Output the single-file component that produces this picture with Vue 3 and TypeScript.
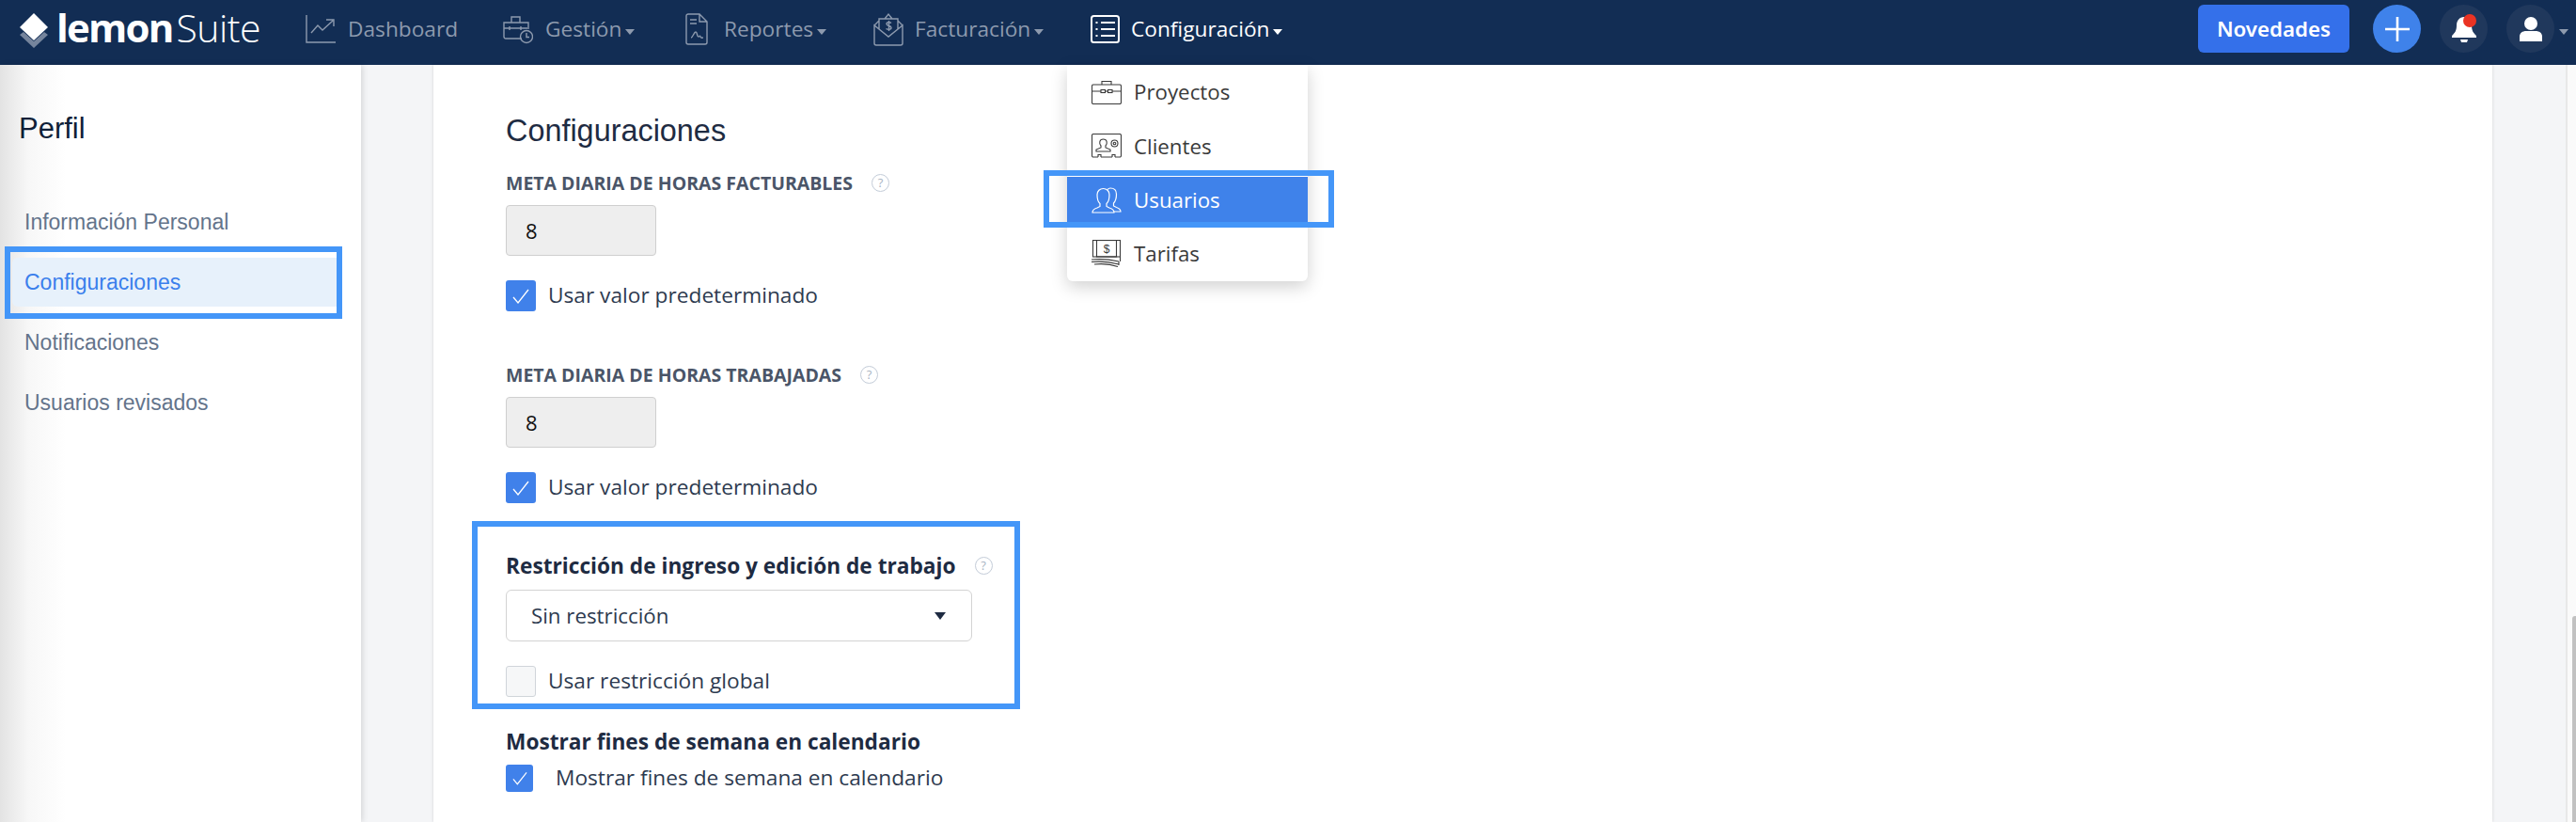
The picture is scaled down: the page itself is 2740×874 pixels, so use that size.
<script setup lang="ts">
const sideItems = [
  { label: 'Información Personal', active: false },
  { label: 'Configuraciones', active: true },
  { label: 'Notificaciones', active: false },
  { label: 'Usuarios revisados', active: false },
]
</script>

<template>
  <div class="page">
    <header class="topbar">
      <div class="logo">
        <svg class="logo-mark" width="32" height="40" viewBox="0 0 32 40">
          <path d="M1 26 L5 23 L16 33 L27 23 L31 26 L16 40Z" fill="#75849c" />
          <path d="M16 3 L31 18 L16 32 L1 18Z" fill="#fff" />
        </svg>
        <span class="logo-bold">lemon</span><span class="logo-light">Suite</span>
      </div>
      <nav class="nav">
        <a class="nav-item w-dash">
          <svg width="32" height="32" viewBox="0 0 32 32" fill="none" stroke="currentColor" stroke-width="1.4">
            <path d="M1 1V30H32" />
            <path d="M6 20L13 12L18 17L29 7M22 6H30V13" />
          </svg>
          <span>Dashboard</span>
        </a>
        <a class="nav-item w-ges">
          <svg width="32" height="32" viewBox="0 0 32 32" fill="none" stroke="currentColor" stroke-width="1.4">
            <path d="M20 26H3a2 2 0 0 1-2-2V9h26v7M9 9V3h9v6M1 15h25M7 13v4M19 13v4" />
            <circle cx="25" cy="24" r="6.5" />
            <path d="M25 20v4.5h3" />
          </svg>
          <span>Gestión</span><i class="caret" />
        </a>
        <a class="nav-item w-rep">
          <svg width="24" height="34" viewBox="0 0 24 34" fill="none" stroke="currentColor" stroke-width="1.4">
            <path d="M15 1H3a2 2 0 0 0-2 2v28a2 2 0 0 0 2 2h18a2 2 0 0 0 2-2V9ZM15 1v8h8M5 7h7M5 11h7" />
            <path d="M6 26c2 0 3-6 5-6s1 5 3 5 1-2 2 0 2 1 3 1" />
          </svg>
          <span>Reportes</span><i class="caret" />
        </a>
        <a class="nav-item w-fac">
          <svg width="32" height="36" viewBox="0 0 32 36" fill="none" stroke="currentColor" stroke-width="1.4">
            <path d="M1 14v19a2 2 0 0 0 2 2h26a2 2 0 0 0 2-2V14L16 26ZM1 14l5-5M31 14l-5-5M6 18V7h20v11M12 7l4-5 4 5" />
            <path d="M19 11.5c-1-1-5-1.500-5 1s5 1.500 5 4-4 2-5.500 1M16.500 9v11" />
          </svg>
          <span>Facturación</span><i class="caret" />
        </a>
        <a class="nav-item active w-con">
          <svg width="32" height="32" viewBox="0 0 32 32" fill="none" stroke="currentColor" stroke-width="2">
            <rect x="1" y="2" width="29" height="28" rx="2.500" />
            <path d="M11 9h15M11 16h15M11 23h15M5.500 9h2M5.500 16h2M5.500 23h2" />
          </svg>
          <span>Configuración</span><i class="caret" />
        </a>
      </nav>
      <div class="top-actions">
        <button class="news">Novedades</button>
        <button class="round plus" aria-label="Nuevo">
          <svg width="26" height="26" viewBox="0 0 26 26"><path d="M13 0v26M0 13h26" stroke="#fff" stroke-width="2.600" /></svg>
        </button>
        <button class="round" aria-label="Notificaciones">
          <svg width="28" height="32" viewBox="0 0 28 32">
            <path d="M14 3c5 0 8 4 8 9 0 6 2 8 5 11v2H1v-2c3-3 5-5 5-11 0-5 3-9 8-9Z" fill="#fff" />
            <path d="M10 27h8l-1 3h-6Z" fill="#fff" />
            <circle cx="20" cy="7" r="7" fill="#ea3323" />
          </svg>
        </button>
        <button class="round" aria-label="Usuario">
          <svg width="24" height="26" viewBox="0 0 24 26">
            <circle cx="12" cy="7" r="7" fill="#fff" />
            <path d="M0 26v-5c0-4 3-6 7-6h10c4 0 7 2 7 6v5Z" fill="#fff" />
          </svg>
        </button>
        <i class="caret user-caret" />
      </div>
    </header>

    <div class="body">
      <aside class="sidebar">
        <h2 class="side-title">Perfil</h2>
        <ul class="side-list">
          <li v-for="item in sideItems" :key="item.label" class="side-item" :class="{ on: item.active }">
            {{ item.label }}
          </li>
        </ul>
      </aside>

      <main class="main">
        <section class="card">
          <h1 class="heading">Configuraciones</h1>

          <div class="label"><span>META DIARIA DE HORAS FACTURABLES</span><span class="help help-1">?</span></div>
          <div class="input">8</div>
          <label class="check-row">
            <span class="check">
              <svg width="18" height="16" viewBox="0 0 18 16"><path d="M1 9l5 6L17 1" fill="none" stroke="#fff" stroke-width="1.300" /></svg>
            </span>
            <span class="check-text">Usar valor predeterminado</span>
          </label>

          <div class="label second"><span>META DIARIA DE HORAS TRABAJADAS</span><span class="help help-1">?</span></div>
          <div class="input">8</div>
          <label class="check-row">
            <span class="check">
              <svg width="18" height="16" viewBox="0 0 18 16"><path d="M1 9l5 6L17 1" fill="none" stroke="#fff" stroke-width="1.300" /></svg>
            </span>
            <span class="check-text">Usar valor predeterminado</span>
          </label>

          <div class="title-row restr"><span>Restricción de ingreso y edición de trabajo</span><span class="help help-2">?</span></div>
          <div class="select"><span>Sin restricción</span><i class="sel-caret" /></div>
          <label class="check-row global">
            <span class="check empty" />
            <span class="check-text">Usar restricción global</span>
          </label>

          <div class="title-row weekend"><span>Mostrar fines de semana en calendario</span></div>
          <label class="check-row last">
            <span class="check small">
              <svg width="16" height="15" viewBox="0 0 18 16"><path d="M1 9l5 6L17 1" fill="none" stroke="#fff" stroke-width="1.300" /></svg>
            </span>
            <span class="check-text">Mostrar fines de semana en calendario</span>
          </label>
        </section>
      </main>

      <div class="scroll"><div class="thumb" /></div>
    </div>

    <div class="menu">
      <div class="menu-item">
        <svg width="32" height="26" viewBox="0 0 32 26" fill="none" stroke="#3a3a3a" stroke-width="1.100">
          <rect x="0.500" y="5" width="31" height="20.500" rx="1.500" />
          <path d="M11 5V1.500h10V5M0.500 12H10M22 12h9.500" />
          <rect x="10" y="10.500" width="4.500" height="3" /><rect x="17.500" y="10.500" width="4.500" height="3" />
          <path d="M14.500 12h3" />
        </svg>
        <span>Proyectos</span>
      </div>
      <div class="menu-item">
        <svg width="32" height="26" viewBox="0 0 32 26" fill="none" stroke="#3a3a3a" stroke-width="1.100">
          <path d="M7 25H2a1.500 1.500 0 0 1-1.500-1.500V2A1.500 1.500 0 0 1 2 .5h28A1.500 1.500 0 0 1 31.500 2v21.500A1.500 1.500 0 0 1 30 25h-5M10 25h12M7 25v-2.500h3V25M22 25v-2.500h3V25" />
          <path d="M5 19v-2l5-2v-2c-2-2-2-7 2.500-7s4.500 5 2.500 7v2l5 2v2Z" />
          <circle cx="24.500" cy="10.500" r="3.500" /><circle cx="24.500" cy="10.500" r="1.300" />
        </svg>
        <span>Clientes</span>
      </div>
      <div class="menu-item sel">
        <svg width="32" height="28" viewBox="0 0 32 28" fill="none" stroke="#fff" stroke-width="1.200">
          <path d="M1 27c0-3 2-4 5-5l3-1.500v-3C6 15 6 11 6 8c0-4 3-6.500 6.500-6.500S19 4 19 8c0 3 0 7-3 9.500v3l3 1.500c3 1 5 2 5 5Z" />
          <path d="M17 2.500c1-1 2-1.500 3-1.500 4 0 6.500 2.500 6.500 6.500 0 3-.5 7-3 9.500v3l3 1.500c3 1 4.500 2.500 4.500 4.500h-7" />
        </svg>
        <span>Usuarios</span>
      </div>
      <div class="menu-item">
        <svg width="32" height="29" viewBox="0 0 32 29" fill="none" stroke="#3a3a3a" stroke-width="1.100">
          <rect x="1.500" y="0.500" width="29" height="17.500" />
          <rect x="5.500" y="0.500" width="21" height="17.500" />
          <path d="M0 21c10-1 20 0 29 2M0 23.500c10-1 20 0 29 2.500M3 26c9-1 18 0 25 2.500M30.500 18v5M29 23v4" />
          <text x="16" y="14" font-size="12" text-anchor="middle" fill="#3a3a3a" stroke="none" font-family="Liberation Sans">$</text>
        </svg>
        <span>Tarifas</span>
      </div>
    </div>

    <div class="mark mark-side" />
    <div class="mark mark-menu" />
    <div class="mark mark-restr" />
  </div>
</template>

<style>
html, body { margin: 0; padding: 0; background: #fff; overflow: hidden; }
</style>

<style scoped>
.page {
  position: relative;
  width: 2740px;
  height: 874px;
  overflow: hidden;
  display: flex;
  flex-direction: column;
  font-family: "Open Sans", "Noto Sans", sans-serif;
}

/* top bar */
.topbar {
  flex: 0 0 69px;
  box-sizing: border-box;
  display: flex;
  align-items: center;
  background: #122d54;
  padding: 0 0 8px 20px;
  color: #fff;
}
.logo { display: flex; align-items: center; width: 305px; }
.logo-mark { margin-right: 8px; }
.logo-bold { font-size: 42px; font-weight: 700; letter-spacing: -1.800px; margin-top: -4px; }
.logo-light { font-size: 41px; font-weight: 300; letter-spacing: -.500px; margin-top: -4px; margin-left: 4px; }
.nav { display: flex; align-items: center; }
.nav-item { display: flex; align-items: center; color: #8d9aae; font-size: 22.700px; }
.nav-item.active { color: #fff; }
.nav-item svg { margin-right: 13px; flex: none; }
.nav-item.w-rep svg { margin-right: 17px; }
.nav-item.w-fac svg { margin-right: 12px; }
.nav-item.w-con svg { margin-right: 11px; }
.w-dash { width: 210px; }
.w-ges { width: 194px; }
.w-rep { width: 200px; }
.w-fac { width: 231px; }
.caret {
  display: inline-block;
  margin-left: 4px;
  margin-top: 6px;
  border-left: 5.500px solid transparent;
  border-right: 5.500px solid transparent;
  border-top: 6px solid currentColor;
}
.top-actions {
  position: relative;
  margin-left: auto;
  display: flex;
  align-items: center;
  gap: 20px;
  padding-right: 23px;
}
.news {
  width: 161px;
  height: 51px;
  margin-right: 5px;
  background: #3470ea;
  border: 0;
  border-radius: 6px;
  color: #fff;
  font: 600 22.300px "Noto Sans", sans-serif;
}
.round {
  width: 51px;
  height: 51px;
  padding: 0;
  border: 0;
  border-radius: 50%;
  background: #20385c;
  display: flex;
  align-items: center;
  justify-content: center;
}
.round.plus { background: #3f82ea; }
.user-caret { position: absolute; right: 8px; top: 26px; margin: 0; color: #8d9aae; }

/* body */
.body { flex: 1; display: flex; min-height: 0; }
.sidebar {
  flex: 0 0 384px;
  position: relative;
  background: linear-gradient(90deg, #e3e3e3 0, #f7f7f7 30px, #fff 70px);
  box-shadow: 2px 0 6px rgba(0, 0, 0, .12);
  z-index: 1;
}
.side-title {
  margin: 49px 0 0 20px;
  font: 400 31px/38px "Liberation Sans", sans-serif;
  color: #0f1f38;
}
.side-list { list-style: none; margin: 54px 0 0 13px; padding: 0; }
.side-item {
  height: 52px;
  margin-bottom: 12px;
  padding-left: 13px;
  display: flex;
  align-items: center;
  border-radius: 6px 0 0 6px;
  font: 400 23px "Liberation Sans", sans-serif;
  color: #64748b;
}
.side-item.on { background: #e7f1fb; color: #3a7fec; margin-right: 26px; }

.main {
  flex: 1;
  display: flex;
  padding: 0 78px 0 77px;
  background: #f4f5f7;
}
.card {
  flex: 1;
  background: #fff;
  padding-left: 77px;
  box-shadow: 0 0 3px rgba(0, 0, 0, .15);
}
.heading {
  margin: 51px 0 0;
  font: 400 32.400px/38px "Liberation Sans", sans-serif;
  color: #1e2b42;
}
.label {
  margin-top: 25px;
  height: 22px;
  display: flex;
  align-items: center;
  font-size: 19.500px;
  font-weight: 700;
  color: #4a5568;
}
.label.second { margin-top: 56px; }
.help {
  flex: none;
  width: 19px;
  height: 19px;
  border: 1px solid #c3ccd8;
  border-radius: 50%;
  box-sizing: border-box;
  display: flex;
  align-items: center;
  justify-content: center;
  font-size: 13px;
  font-weight: 400;
  color: #a9b4c3;
}
.help-1 { margin-left: 20px; }
.help-2 { margin-left: 20px; }
.input {
  width: 160px;
  height: 54px;
  margin-top: 13px;
  box-sizing: border-box;
  padding-left: 20px;
  display: flex;
  align-items: center;
  background: #eee;
  border: 1px solid #cfcfcf;
  border-radius: 4px;
  font-size: 22px;
  color: #111;
}
.check-row {
  margin-top: 26px;
  display: flex;
  align-items: center;
  gap: 13px;
  height: 33px;
  font-size: 22.700px;
  color: #2d3a4f;
}
.check-text { margin-top: -2px; }
.check {
  flex: none;
  box-sizing: border-box;
  width: 32px;
  height: 33px;
  border-radius: 3px;
  background: #4081ea;
  display: flex;
  align-items: center;
  justify-content: center;
}
.check.empty { background: #f6f7f8; border: 1px solid #d0d5da; }
.check.small { width: 29px; height: 29px; }
.title-row {
  display: flex;
  align-items: center;
  height: 28px;
  font-size: 22.700px;
  font-weight: 700;
  color: #1e2b42;
}
.restr { margin-top: 52px; }
.select {
  width: 496px;
  height: 55px;
  margin-top: 12px;
  box-sizing: border-box;
  padding: 0 27px 0 26px;
  display: flex;
  align-items: center;
  justify-content: space-between;
  border: 1px solid #d3d3d3;
  border-radius: 6px;
  font-size: 22.300px;
  color: #2d3a4f;
}
.sel-caret {
  border-left: 6px solid transparent;
  border-right: 6px solid transparent;
  border-top: 8px solid #1e2b42;
}
.global { margin-top: 26px; }
.weekend { margin-top: 33px; }
.check-row.last { margin-top: 11px; gap: 24px; height: 29px; }

.scroll {
  flex: 0 0 11px;
  position: relative;
  background: #fafafa;
  border-left: 2px solid #e8e8e8;
  box-sizing: border-box;
}
.thumb { position: absolute; right: 0; top: 586px; bottom: 0; width: 4px; background: #c1c1c1; border-radius: 3px 0 0 0; }

/* dropdown */
.menu {
  position: absolute;
  left: 1135px;
  top: 69px;
  width: 256px;
  height: 230px;
  background: #fff;
  border-radius: 0 0 6px 6px;
  box-shadow: 0 6px 18px rgba(0, 0, 0, .18);
  z-index: 3;
}
.menu-item {
  height: 57.500px;
  display: flex;
  align-items: center;
  padding-left: 26px;
  font-size: 22.300px;
  color: #3a3a3a;
}
.menu-item svg { flex: none; margin-right: 13px; }
.menu-item.sel { background: #3f82ea; color: #fff; height: 49px; margin: 4px 0; }

/* annotations */
.mark { position: absolute; border: 6px solid #4496f8; box-sizing: border-box; z-index: 4; }
.mark-side { left: 5px; top: 262px; width: 359px; height: 77px; }
.mark-menu { left: 1110px; top: 181px; width: 309px; height: 61px; }
.mark-restr { left: 502px; top: 554px; width: 583px; height: 200px; }
</style>
